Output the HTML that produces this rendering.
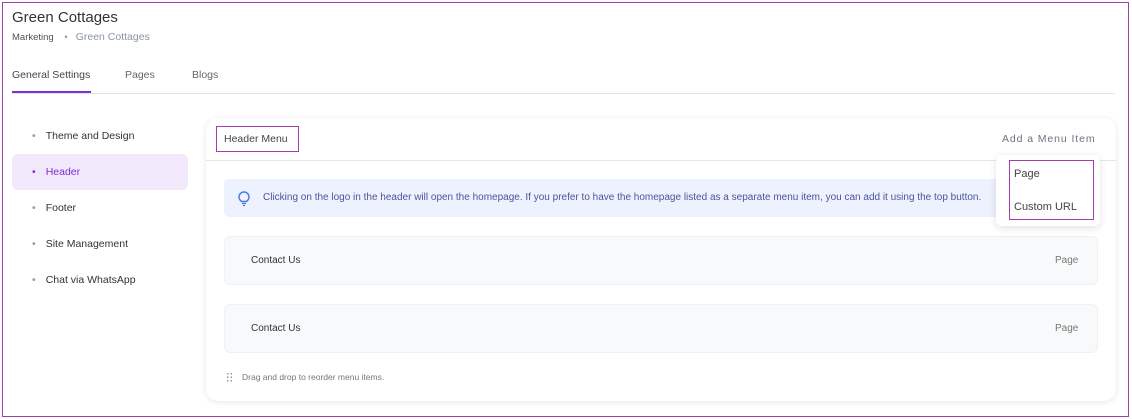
<!DOCTYPE html>
<html><head><style>
*{margin:0;padding:0;box-sizing:border-box}
body{width:1132px;height:419px;background:#fff;font-family:"Liberation Sans",sans-serif;position:relative;overflow:hidden;color:#333}
.a{position:absolute;white-space:nowrap}
</style></head><body>
<div class="a" style="left:2px;top:2px;width:1127px;height:415px;border:1px solid #a040a8"></div>
<div class="a" style="left:12px;top:9px;font-size:15px;color:#333">Green Cottages</div>
<div class="a" style="left:12px;top:31px;font-size:9.5px;color:#555">Marketing <span style="margin:0 8px 0 8px;color:#999">•</span><span style="color:#8a94a6;font-size:10.5px">Green Cottages</span></div>
<div class="a" style="left:12px;top:69px;font-size:10.5px;color:#444">General Settings</div>
<div class="a" style="left:125px;top:69px;font-size:10.5px;color:#666">Pages</div>
<div class="a" style="left:192px;top:69px;font-size:10.5px;color:#666">Blogs</div>
<div class="a" style="left:12px;top:93px;width:1103px;height:1px;background:#e3e3e3"></div>
<div class="a" style="left:12px;top:91px;width:79px;height:2px;background:#7e2fd0"></div>

<div class="a" style="left:12px;top:154px;width:176px;height:36px;background:#f1e9fb;border-radius:6px"></div>
<div class="a" style="left:32px;top:130px;font-size:10.5px;line-height:12px;color:#333"><span style="color:#999;margin-right:10px">•</span>Theme and Design</div>
<div class="a" style="left:32px;top:166px;font-size:10.5px;line-height:12px;color:#7e2fd0"><span style="margin-right:10px">•</span>Header</div>
<div class="a" style="left:32px;top:202px;font-size:10.5px;line-height:12px;color:#333"><span style="color:#999;margin-right:10px">•</span>Footer</div>
<div class="a" style="left:32px;top:238px;font-size:10.5px;line-height:12px;color:#333"><span style="color:#999;margin-right:10px">•</span>Site Management</div>
<div class="a" style="left:32px;top:274px;font-size:10.5px;line-height:12px;color:#333"><span style="color:#999;margin-right:10px">•</span>Chat via WhatsApp</div>

<div class="a" style="left:206px;top:118px;width:910px;height:283px;border-radius:12px;background:#fff;box-shadow:0 1px 6px rgba(0,0,0,.1)"></div>
<div class="a" style="left:206px;top:160px;width:910px;height:1px;background:#e6e6e6"></div>
<div class="a" style="left:216px;top:126px;width:83px;height:26px;border:1px solid #a040a8;font-size:10.5px;line-height:25px;padding-left:7px;color:#444">Header Menu</div>
<div class="a" style="left:1002px;top:133px;font-size:10.5px;color:#6b7280;letter-spacing:0.9px">Add a Menu Item</div>

<div class="a" style="left:224px;top:179px;width:874px;height:38px;background:#eef2fe;border-radius:5px;overflow:hidden">
<svg class="a" style="left:13px;top:11px" width="14" height="17" viewBox="0 0 14 17"><path d="M4.5 11.5C3 10.3 2 8.8 2 7a5 5 0 0 1 10 0c0 1.8-1 3.3-2.5 4.5z" fill="none" stroke="#4a7be8" stroke-width="1.5"/><path d="M5 13.5h4M6 15.5h2" stroke="#4a7be8" stroke-width="1.3"/></svg>
<div class="a" style="left:39px;top:13px;font-size:10px;color:#4b5597">Clicking on the logo in the header will open the homepage. If you prefer to have the homepage listed as a separate menu item, you can add it using the top button.</div>
</div>

<div class="a" style="left:224px;top:236px;width:874px;height:49px;background:#f8f9fa;border:1px solid #f0f1f3;border-radius:6px"></div>
<div class="a" style="left:251px;top:255px;font-size:10px;color:#333">Contact Us</div>
<div class="a" style="left:1055px;top:255px;font-size:10px;color:#777">Page</div>
<div class="a" style="left:224px;top:304px;width:874px;height:49px;background:#f8f9fa;border:1px solid #f0f1f3;border-radius:6px"></div>
<div class="a" style="left:251px;top:323px;font-size:10px;color:#333">Contact Us</div>
<div class="a" style="left:1055px;top:323px;font-size:10px;color:#777">Page</div>
<svg class="a" style="left:227px;top:373px" width="6" height="9" viewBox="0 0 6 9"><g fill="#999"><rect x="0" y="0" width="1.5" height="1.5"/><rect x="3.5" y="0" width="1.5" height="1.5"/><rect x="0" y="3.5" width="1.5" height="1.5"/><rect x="3.5" y="3.5" width="1.5" height="1.5"/><rect x="0" y="7" width="1.5" height="1.5"/><rect x="3.5" y="7" width="1.5" height="1.5"/></g></svg>
<div class="a" style="left:242px;top:372px;font-size:8.5px;color:#777">Drag and drop to reorder menu items.</div>

<div class="a" style="left:996px;top:155px;width:104px;height:71px;background:#fff;border-radius:6px;box-shadow:0 2px 8px rgba(0,0,0,.12)"></div>
<div class="a" style="left:1009px;top:160px;width:85px;height:60px;border:1px solid #a040a8"></div>
<div class="a" style="left:1014px;top:168px;font-size:11px;color:#444">Page</div>
<div class="a" style="left:1014px;top:201px;font-size:11px;color:#444">Custom URL</div>
</body></html>
